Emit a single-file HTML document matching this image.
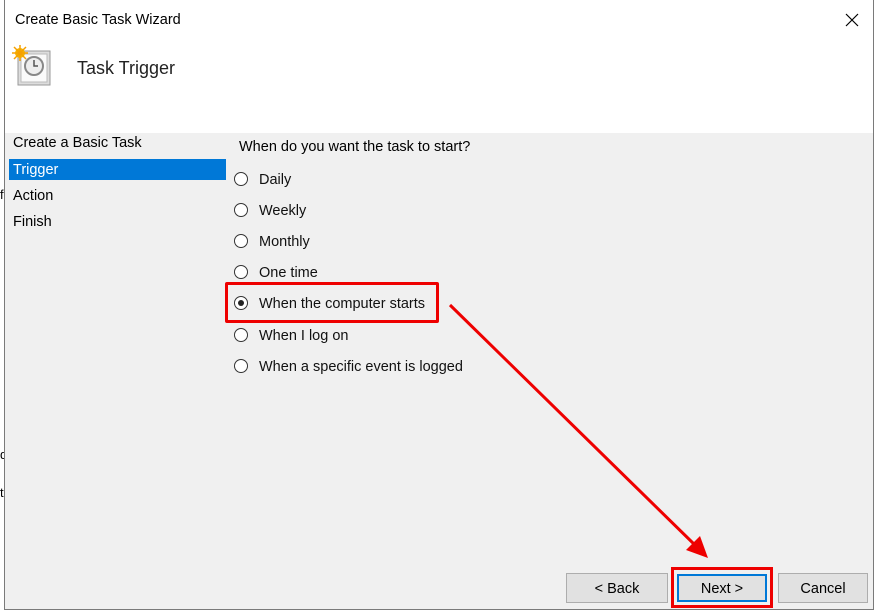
<!DOCTYPE html>
<html><head><style>
body{margin:0;width:878px;height:614px;background:#fff;position:relative;overflow:hidden;font-family:"Liberation Sans",sans-serif;font-size:14px;color:#000}
.a{position:absolute}
.win{left:4px;top:-1px;width:868px;height:609px;border:1px solid #7a7a7a;background:#f0f0f0}
.hdr{left:0;top:0;width:868px;height:133px;background:#fff}
.r{position:absolute;left:234px;width:14px;height:14px;border:1px solid #333;border-radius:50%;background:#fff;box-sizing:border-box}
.lbl{position:absolute;left:259px;font-size:14.5px;color:#111}
.btn{position:absolute;top:573px;height:30px;background:#e1e1e1;border:1px solid #adadad;box-sizing:border-box;text-align:center;line-height:30px;font-size:14.5px}
</style></head><body>
<div class="a" style="left:0;top:187px;font-size:13px">f</div>
<div class="a" style="left:0;top:447px;font-size:13px">d</div>
<div class="a" style="left:0;top:485px;font-size:13px">t</div>
<div class="a win">
 <div class="a hdr"></div>
</div>
<div class="a" style="left:15px;top:12px;font-size:14.5px">Create Basic Task Wizard</div>
<svg class="a" style="left:845px;top:13px" width="14" height="14"><path d="M1 1L13 13M13 1L1 13" stroke="#000" stroke-width="1.2"/></svg>
<svg class="a" style="left:12px;top:45px" width="42" height="42">
 <rect x="6" y="6" width="32" height="34" fill="#ddd" stroke="#999"/>
 <rect x="9" y="9" width="26" height="28" fill="#fafafa" stroke="#bbb"/>
 <circle cx="22" cy="21" r="9" fill="#eee" stroke="#888" stroke-width="2"/>
 <path d="M22 15v6h4" stroke="#555" stroke-width="1.5" fill="none"/>
 <circle cx="8" cy="8" r="5" fill="#f5b400"/>
 <path d="M8 0v16M0 8h16M2 2l12 12M14 2L2 14" stroke="#f5a000" stroke-width="1.5"/>
</svg>
<div class="a" style="left:77px;top:58px;font-size:18px;color:#222">Task Trigger</div>
<div class="a" style="left:13px;top:135px;font-size:14.5px">Create a Basic Task</div>
<div class="a" style="left:9px;top:159px;width:217px;height:21px;background:#0078d7"></div>
<div class="a" style="left:13px;top:162px;font-size:14.5px;color:#fff">Trigger</div>
<div class="a" style="left:13px;top:188px;font-size:14.5px">Action</div>
<div class="a" style="left:13px;top:214px;font-size:14.5px">Finish</div>
<div class="a" style="left:239px;top:139px;font-size:14.5px">When do you want the task to start?</div>
<div class="r" style="top:172px"></div><div class="lbl" style="top:172px">Daily</div>
<div class="r" style="top:203px"></div><div class="lbl" style="top:203px">Weekly</div>
<div class="r" style="top:234px"></div><div class="lbl" style="top:234px">Monthly</div>
<div class="r" style="top:265px"></div><div class="lbl" style="top:265px">One time</div>
<div class="r" style="top:296px"></div><div class="a" style="left:238px;top:300px;width:6px;height:6px;border-radius:50%;background:#222"></div><div class="lbl" style="top:296px">When the computer starts</div>
<div class="r" style="top:328px"></div><div class="lbl" style="top:328px">When I log on</div>
<div class="r" style="top:359px"></div><div class="lbl" style="top:359px">When a specific event is logged</div>
<div class="a" style="left:225px;top:282px;width:208px;height:35px;border:3px solid #e00;border-radius:2px"></div>
<div class="btn" style="left:566px;width:102px">&lt; Back</div>
<div class="btn" style="left:677px;top:574px;height:28px;width:90px;border:2px solid #0078d7;line-height:26px">Next &gt;</div>
<div class="btn" style="left:778px;width:90px">Cancel</div>
<div class="a" style="left:671px;top:567px;width:96px;height:35px;border:3px solid #e00"></div>
<svg class="a" style="left:0;top:0" width="878" height="614">
 <line x1="450" y1="305" x2="697" y2="547" stroke="#e00" stroke-width="3"/>
 <polygon points="708,558 686,550 700,536" fill="#e00"/>
</svg>
</body></html>
